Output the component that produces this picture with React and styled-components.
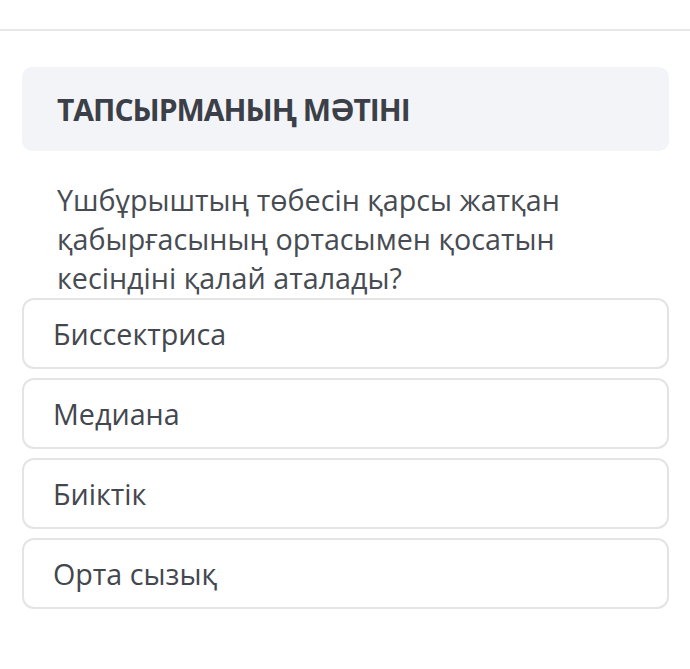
import React from "react";
import styled, { createGlobalStyle } from "styled-components";

const GlobalStyle = createGlobalStyle`
  body {
    margin: 0;
    background: #ffffff;
    font-family: "Open Sans", "Noto Sans", sans-serif;
  }
`;

const TopBar = styled.div`
  height: 29px;
  border-bottom: 2px solid #e8e8e8;
`;

const Content = styled.div`
  padding: 36px 21px 0 22px;
  display: flex;
  flex-direction: column;
`;

const TaskHeader = styled.div`
  height: 84px;
  display: flex;
  align-items: center;
  padding-left: 35px;
  background: #f3f4f7;
  border-radius: 10px;
  font-size: 30px;
  font-weight: 700;
  color: #3b3f47;
  letter-spacing: -1px;
`;

const Question = styled.div`
  margin-top: 29px;
  padding: 0 35px;
  font-size: 28.7px;
  line-height: 39px;
  color: #474b52;
`;

const Options = styled.div`
  display: flex;
  flex-direction: column;
  gap: 9px;
  margin-top: 1px;
`;

const Option = styled.div`
  height: 71px;
  box-sizing: border-box;
  display: flex;
  align-items: center;
  padding-left: 29px;
  border: 2px solid #e4e4e4;
  border-radius: 12px;
  font-size: 28.7px;
  color: #43474e;
`;

const answers = ["Биссектриса", "Медиана", "Биіктік", "Орта сызық"];

export default function App() {
  return (
    <>
      <GlobalStyle />
      <TopBar />
      <Content>
        <TaskHeader>ТАПСЫРМАНЫҢ МӘТІНІ</TaskHeader>
        <Question>
          Үшбұрыштың төбесін қарсы жатқан қабырғасының ортасымен қосатын
          кесіндіні қалай аталады?
        </Question>
        <Options>
          {answers.map((a) => (
            <Option key={a}>{a}</Option>
          ))}
        </Options>
      </Content>
    </>
  );
}
